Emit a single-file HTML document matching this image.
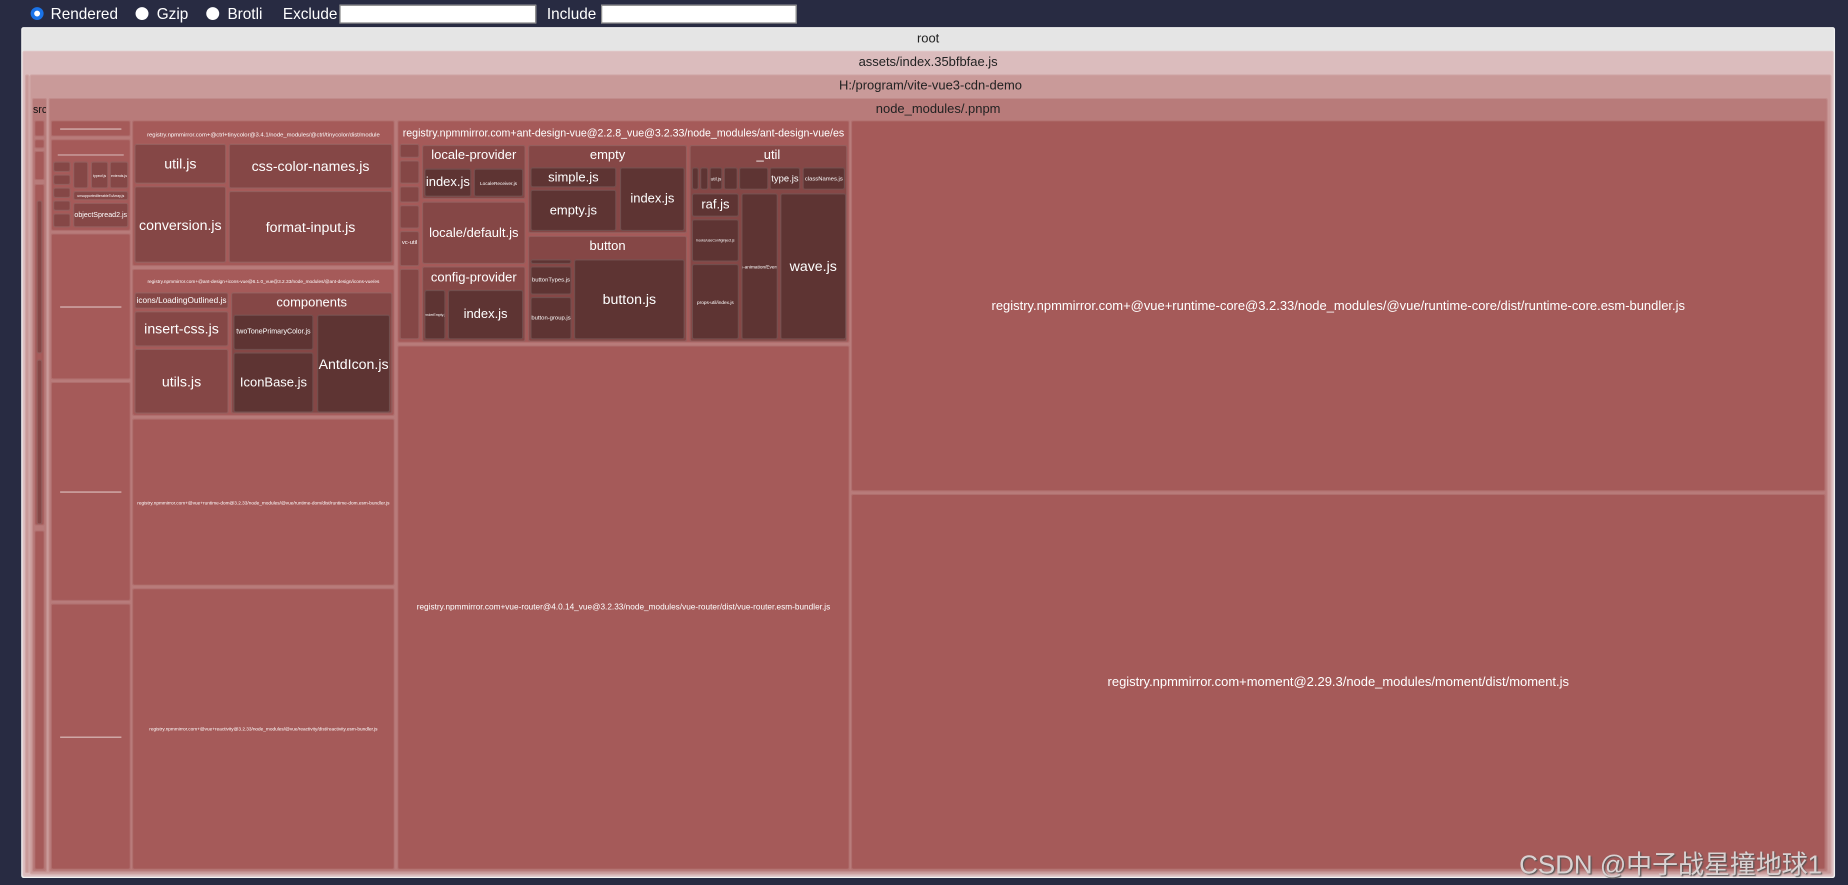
<!DOCTYPE html>
<html><head><meta charset="utf-8"><style>
html,body{margin:0;padding:0;width:1848px;height:885px;overflow:hidden;background:#282b42;}
#w{position:absolute;left:0;top:0;width:1568px;height:751px;transform:scale(1.17857);transform-origin:0 0;font-family:"Liberation Sans","Noto Sans CJK SC",sans-serif;}
.b{position:absolute;box-sizing:border-box;border-radius:2px;overflow:hidden;white-space:nowrap;color:#fff;border:1px solid rgba(255,255,255,.13);}
.f{display:flex;align-items:center;justify-content:center;}
.t{position:absolute;left:0;right:0;text-align:center;white-space:nowrap;}
.c1{background:#a55a59}.c2{background:#854746}.c3{background:#5e3433}
.ln{display:block;height:1px;background:rgba(255,255,255,.6);width:80%;}
.top{position:absolute;top:0;height:22px;font-size:13px;color:#fff;line-height:24px}
.rad{position:absolute;top:6px;width:11px;height:11px;border-radius:50%;background:#fff;box-sizing:border-box}
.inp{position:absolute;top:4px;height:16px;background:#fff;border:1px solid #888;box-sizing:border-box}
</style></head><body><div id="w">
<div class="rad" style="left:26px;border:3px solid #1a73e8"></div><div class="top" style="left:43px">Rendered</div>
<div class="rad" style="left:115px"></div><div class="top" style="left:133px">Gzip</div>
<div class="rad" style="left:175px"></div><div class="top" style="left:193px">Brotli</div>
<div class="top" style="left:240px">Exclude</div><div class="inp" style="left:288px;width:167px"></div>
<div class="top" style="left:464px">Include</div><div class="inp" style="left:510px;width:166px"></div>

<div class="b" style="left:18px;top:23px;width:1539px;height:722px;background:#e5e5e5;border-color:#f2f2f2;color:#222"><div class="t" style="top:3px;font-size:11px">root</div></div>
<div class="b" style="left:19px;top:43px;width:1537px;height:701px;background:#dbbcbd;color:#222"><div class="t" style="top:3px;font-size:11px">assets/index.35bfbfae.js</div></div>
<div class="b" style="left:21px;top:63px;width:4px;height:678px;background:#c99a99"></div>
<div class="b" style="left:25px;top:63px;width:1529px;height:679px;background:#c99a99;color:#222"><div class="t" style="top:3px;font-size:11px">H:/program/vite-vue3-cdn-demo</div></div>
<div class="b" style="left:27px;top:83px;width:13px;height:657px;background:#b87b7a;color:#111"><div style="position:absolute;left:0;top:4px;font-size:9px">src</div></div>
<div class="b c1" style="left:29px;top:102px;width:9px;height:14px"></div>
<div class="b c1" style="left:29px;top:118px;width:9px;height:8px"></div>
<div class="b c1" style="left:29px;top:128px;width:9px;height:25px"></div>
<div class="b c1" style="left:29px;top:156px;width:9px;height:290px"></div>
<div class="b c2" style="left:31px;top:170px;width:5px;height:130px"></div>
<div class="b c2" style="left:31px;top:305px;width:5px;height:140px"></div>
<div class="b c1" style="left:29px;top:450px;width:9px;height:288px"></div>
<div class="b" style="left:41px;top:83px;width:1510px;height:657px;background:#b87b7a;color:#222"><div class="t" style="top:3px;font-size:11px">node_modules/.pnpm</div></div>

<!-- column A -->
<div class="b c1 f" style="left:43px;top:102px;width:68px;height:14px"><span class="ln"></span></div>
<div class="b c1" style="left:43px;top:118px;width:68px;height:78px"><div style="position:absolute;left:5px;right:5px;top:12px;height:1px;background:rgba(255,255,255,.5)"></div></div>
<div class="b c2" style="left:45px;top:137px;width:15px;height:9px"></div>
<div class="b c2" style="left:45px;top:148px;width:15px;height:9px"></div>
<div class="b c2" style="left:45px;top:159px;width:15px;height:9px"></div>
<div class="b c2" style="left:45px;top:170px;width:15px;height:9px"></div>
<div class="b c2" style="left:45px;top:181px;width:15px;height:12px"></div>
<div class="b c2" style="left:62px;top:137px;width:13px;height:23px"></div>
<div class="b c2 f" style="left:77px;top:137px;width:15px;height:23px;font-size:3px">typeof.js</div>
<div class="b c2 f" style="left:93px;top:137px;width:16px;height:23px;font-size:3px">extends.js</div>
<div class="b c2 f" style="left:62px;top:162px;width:47px;height:8px;font-size:3px">unsupportedIterableToArray.js</div>
<div class="b c2 f" style="left:62px;top:172px;width:47px;height:21px;font-size:6px">objectSpread2.js</div>
<div class="b c1 f" style="left:43px;top:198px;width:68px;height:124px"><span class="ln"></span></div>
<div class="b c1 f" style="left:43px;top:324px;width:68px;height:186px"><span class="ln"></span></div>
<div class="b c1 f" style="left:43px;top:512px;width:68px;height:226px"><span class="ln"></span></div>

<!-- column B -->
<div class="b c1" style="left:112px;top:102px;width:223px;height:124px"><div class="t" style="top:9px;font-size:5px">registry.npmmirror.com+@ctrl+tinycolor@3.4.1/node_modules/@ctrl/tinycolor/dist/module</div></div>
<div class="b c2 f" style="left:114px;top:122px;width:78px;height:34px;font-size:12px">util.js</div>
<div class="b c2 f" style="left:114px;top:158px;width:78px;height:65px;font-size:12px">conversion.js</div>
<div class="b c2 f" style="left:194px;top:122px;width:139px;height:38px;font-size:12px">css-color-names.js</div>
<div class="b c2 f" style="left:194px;top:162px;width:139px;height:61px;font-size:12px">format-input.js</div>

<div class="b c1" style="left:112px;top:228px;width:223px;height:125px"><div class="t" style="top:7px;font-size:4px">registry.npmmirror.com+@ant-design+icons-vue@6.1.0_vue@3.2.33/node_modules/@ant-design/icons-vue/es</div></div>
<div class="b c2 f" style="left:114px;top:248px;width:80px;height:14px;font-size:7px">icons/LoadingOutlined.js</div>
<div class="b c2 f" style="left:114px;top:264px;width:80px;height:30px;font-size:12px">insert-css.js</div>
<div class="b c2 f" style="left:114px;top:296px;width:80px;height:55px;font-size:12px">utils.js</div>
<div class="b c2" style="left:196px;top:248px;width:137px;height:103px"><div class="t" style="top:2px;font-size:11px">components</div></div>
<div class="b c3 f" style="left:198px;top:267px;width:68px;height:30px;font-size:6px">twoTonePrimaryColor.js</div>
<div class="b c3 f" style="left:198px;top:299px;width:68px;height:51px;font-size:11px">IconBase.js</div>
<div class="b c3 f" style="left:269px;top:267px;width:62px;height:83px;font-size:12px">AntdIcon.js</div>

<div class="b c1 f" style="left:112px;top:355px;width:223px;height:142px;font-size:4px">registry.npmmirror.com+@vue+runtime-dom@3.2.33/node_modules/@vue/runtime-dom/dist/runtime-dom.esm-bundler.js</div>
<div class="b c1 f" style="left:112px;top:499px;width:223px;height:239px;font-size:4px">registry.npmmirror.com+@vue+reactivity@3.2.33/node_modules/@vue/reactivity/dist/reactivity.esm-bundler.js</div>

<!-- column C -->
<div class="b c1" style="left:337px;top:102px;width:384px;height:189px"><div class="t" style="top:5px;font-size:9px">registry.npmmirror.com+ant-design-vue@2.2.8_vue@3.2.33/node_modules/ant-design-vue/es</div></div>
<div class="b c2" style="left:339px;top:122px;width:17px;height:12px"></div>
<div class="b c2" style="left:339px;top:136px;width:17px;height:20px"></div>
<div class="b c2" style="left:339px;top:158px;width:17px;height:14px"></div>
<div class="b c2" style="left:339px;top:174px;width:17px;height:20px"></div>
<div class="b c2 f" style="left:339px;top:196px;width:17px;height:30px;font-size:5px;align-items:flex-start;padding-top:6px">vc-util</div>
<div class="b c2" style="left:339px;top:228px;width:17px;height:60px"></div>
<div class="b c2" style="left:358px;top:123px;width:88px;height:46px"><div class="t" style="top:2px;font-size:11px">locale-provider</div></div>
<div class="b c3 f" style="left:360px;top:143px;width:40px;height:24px;font-size:11px">index.js</div>
<div class="b c3 f" style="left:402px;top:143px;width:42px;height:24px;font-size:4px">LocaleReceiver.js</div>
<div class="b c2 f" style="left:358px;top:171px;width:88px;height:53px;font-size:11px">locale/default.js</div>
<div class="b c2" style="left:358px;top:226px;width:88px;height:64px"><div class="t" style="top:3px;font-size:11px">config-provider</div></div>
<div class="b c3 f" style="left:360px;top:246px;width:18px;height:42px;font-size:3px">renderEmpty.js</div>
<div class="b c3 f" style="left:380px;top:246px;width:64px;height:42px;font-size:11px">index.js</div>
<div class="b c2" style="left:448px;top:123px;width:135px;height:75px"><div class="t" style="top:2px;font-size:11px">empty</div></div>
<div class="b c3 f" style="left:450px;top:142px;width:73px;height:17px;font-size:11px">simple.js</div>
<div class="b c3 f" style="left:450px;top:161px;width:73px;height:35px;font-size:11px">empty.js</div>
<div class="b c3 f" style="left:526px;top:142px;width:55px;height:54px;font-size:11px">index.js</div>
<div class="b c2" style="left:448px;top:200px;width:135px;height:90px"><div class="t" style="top:2px;font-size:11px">button</div></div>
<div class="b c3" style="left:450px;top:220px;width:35px;height:4px"></div>
<div class="b c3 f" style="left:450px;top:226px;width:35px;height:24px;font-size:5px">buttonTypes.js</div>
<div class="b c3 f" style="left:450px;top:252px;width:35px;height:36px;font-size:5px">button-group.js</div>
<div class="b c3 f" style="left:487px;top:220px;width:94px;height:68px;font-size:12px">button.js</div>
<div class="b c2" style="left:585px;top:123px;width:134px;height:167px"><div class="t" style="top:2px;font-size:11px">_util</div></div>
<div class="b c3" style="left:587px;top:142px;width:6px;height:19px"></div>
<div class="b c3" style="left:594px;top:142px;width:7px;height:19px"></div>
<div class="b c3 f" style="left:602px;top:142px;width:11px;height:19px;font-size:4px">util.js</div>
<div class="b c3" style="left:614px;top:142px;width:12px;height:19px"></div>
<div class="b c3" style="left:627px;top:142px;width:25px;height:19px"></div>
<div class="b c3 f" style="left:653px;top:142px;width:26px;height:19px;font-size:8px">type.js</div>
<div class="b c3 f" style="left:681px;top:142px;width:36px;height:19px;font-size:5px">classNames.js</div>
<div class="b c3 f" style="left:587px;top:164px;width:40px;height:20px;font-size:11px">raf.js</div>
<div class="b c3 f" style="left:587px;top:186px;width:40px;height:36px;font-size:3px">hooks/useConfigInject.js</div>
<div class="b c3 f" style="left:587px;top:224px;width:40px;height:64px;font-size:4px">props-util/index.js</div>
<div class="b c3 f" style="left:629px;top:164px;width:31px;height:124px;font-size:4px">css-animation/Event.js</div>
<div class="b c3 f" style="left:662px;top:164px;width:56px;height:124px;font-size:12px">wave.js</div>
<div class="b c1 f" style="left:337px;top:293px;width:384px;height:445px;font-size:7px">registry.npmmirror.com+vue-router@4.0.14_vue@3.2.33/node_modules/vue-router/dist/vue-router.esm-bundler.js</div>

<!-- column D -->
<div class="b c1 f" style="left:722px;top:102px;width:827px;height:315px;font-size:11px">registry.npmmirror.com+@vue+runtime-core@3.2.33/node_modules/@vue/runtime-core/dist/runtime-core.esm-bundler.js</div>
<div class="b c1 f" style="left:722px;top:419px;width:827px;height:319px;font-size:11px">registry.npmmirror.com+moment@2.29.3/node_modules/moment/dist/moment.js</div>

<div style="position:absolute;left:1289px;top:716px;font-size:22px;color:#d9d2d2;text-shadow:1px 1px 1px #555;white-space:nowrap;font-family:'Liberation Sans','Noto Sans CJK SC',sans-serif">CSDN @中子战星撞地球1</div>
</div></body></html>
